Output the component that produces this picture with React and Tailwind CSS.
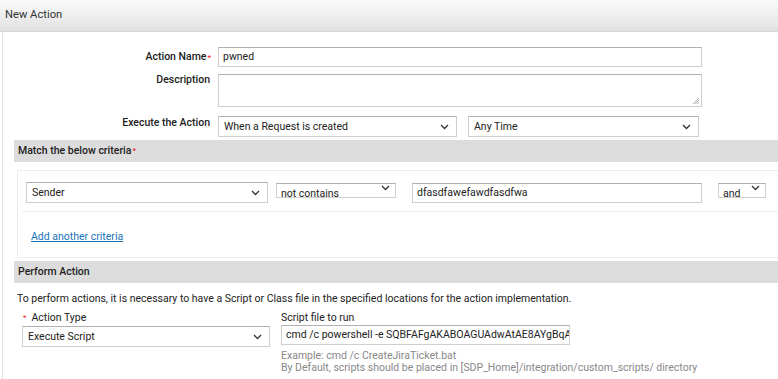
import React from "react";

const Chevron = () => (
  <svg width="9" height="6" viewBox="0 0 9 6" className="shrink-0">
    <polyline points="1,1 4.5,4.5 8,1" fill="none" stroke="#333" strokeWidth="1.3" />
  </svg>
);

function Select({ value, className = "" }) {
  return (
    <div
      className={`flex items-center justify-between border border-[#cfcfcf] border-t-[#b0b0b0] bg-white pl-[5px] pr-[7px] ${className}`}
    >
      <span className="truncate">{value}</span>
      <Chevron />
    </div>
  );
}

function ClippedSelect({ value, className = "" }) {
  return (
    <div
      className={`relative overflow-hidden border border-[#cfcfcf] border-t-[#b0b0b0] bg-white ${className}`}
    >
      <span className="absolute left-[4px] top-[4px] leading-[12px]">{value}</span>
      <span className="absolute right-[5px] top-[1px]">
        <Chevron />
      </span>
    </div>
  );
}

export default function App() {
  return (
    <div
      className="w-[778px] h-[379px] overflow-hidden bg-white text-[10.5px] text-[#222]"
      style={{ fontFamily: "Roboto, 'Liberation Sans', sans-serif" }}
    >
      <div className="h-[32px] flex items-center pl-[5px] bg-gradient-to-b from-[#fbfbfb] to-[#e1e1e1] border-b border-[#d6d6d6] text-[11.2px] text-[#333]">
        New Action
      </div>
      <div className="ml-[2px] border-l border-[#e2e2e2] h-[347px]">
        <div className="pt-[15px] grid grid-cols-[208px_1fr] gap-x-[7px] items-start">
          <div className="text-right font-medium h-[20px] leading-[20px]">
            Action Name<span className="text-[#e22] text-[8px] align-top relative top-[1px] ml-px">*</span>
          </div>
          <div className="h-[20px] w-[484px] border border-[#cfcfcf] border-t-[#b0b0b0] pl-[4px] leading-[18px]">
            pwned
          </div>
          <div className="text-right font-medium mt-[7px] leading-[12px] pr-[1px]">Description</div>
          <div className="mt-[7px] h-[33px] w-[484px] border border-[#cfcfcf] border-t-[#b0b0b0] relative">
            <svg width="8" height="8" viewBox="0 0 8 8" className="absolute right-[1px] bottom-[1px]">
              <line x1="7" y1="1" x2="1" y2="7" stroke="#999" strokeWidth="0.8" />
              <line x1="7" y1="3" x2="3" y2="7" stroke="#999" strokeWidth="0.8" />
              <line x1="7" y1="5" x2="5" y2="7" stroke="#999" strokeWidth="0.8" />
            </svg>
          </div>
          <div className="text-right font-medium mt-[9px] leading-[14px] pr-[1px]">Execute the Action</div>
          <div className="mt-[9px] flex gap-[11px]">
            <Select value="When a Request is created" className="h-[21px] w-[239px]" />
            <Select value="Any Time" className="h-[21px] w-[231px]" />
          </div>
        </div>

        <div className="mt-[3px] ml-[11px] h-[22px] bg-[#dcdcdc] flex items-center pl-[4px] font-medium">
          Match the below criteria<span className="text-[#e22] text-[8px] self-start mt-[5px] ml-px">*</span>
        </div>

        <div className="mt-[8px] ml-[14px] border border-[#ececec] border-r-0 h-[88px]">
          <div className="flex items-start pt-[11px] pl-[8px] h-[40px]">
            <Select value="Sender" className="h-[21px] w-[242px]" />
            <ClippedSelect value="not contains" className="ml-[8px] mt-px h-[15px] w-[120px]" />
            <div className="ml-[16px] mt-px h-[20px] w-[290px] border border-[#cfcfcf] border-t-[#b0b0b0] pl-[4px] leading-[18px]">
              dfasdfawefawdfasdfwa
            </div>
            <ClippedSelect value="and" className="ml-[16px] mt-px h-[15px] w-[48px]" />
          </div>
          <div className="ml-[4px] border-t border-[#eeeeee]"></div>
          <div className="pl-[13px] pt-[19px] leading-[12px]">
            <span className="text-[#1a72b8] underline">Add another criteria</span>
          </div>
        </div>

        <div className="mt-[3px] ml-[11px] h-[22px] bg-[#dcdcdc] flex items-center pl-[4px] font-medium">
          Perform Action
        </div>

        <div className="pl-[14px] mt-[10px] leading-[12px]">
          To perform actions, it is necessary to have a Script or Class file in the specified locations for the action implementation.
        </div>

        <div className="flex pl-[19px] mt-[7px]">
          <div className="w-[248px]">
            <div className="leading-[12px]">
              <span className="text-[#e22] text-[8px] relative -top-[1px] ml-[1px] mr-[5px]">*</span>Action Type
            </div>
            <Select value="Execute Script" className="mt-[1px] h-[21px] w-[248px]" />
          </div>
          <div className="ml-[11px]">
            <div className="leading-[12px]">Script file to run</div>
            <div className="mt-[1px] h-[20px] w-[289px] border border-[#cfcfcf] border-t-[#b0b0b0] pl-[4px] leading-[18px] overflow-hidden whitespace-nowrap">
              cmd /c powershell -e SQBFAFgAKABOAGUAdwAtAE8AYgBqA
            </div>
            <div className="mt-[5px] leading-[11.5px] text-[#888]">
              Example: cmd /c CreateJiraTicket.bat
            </div>
            <div className="leading-[11.5px] text-[#888] whitespace-nowrap">
              By Default, scripts should be placed in [SDP_Home]/integration/custom_scripts/ directory
            </div>
          </div>
        </div>
      </div>
    </div>
  );
}
